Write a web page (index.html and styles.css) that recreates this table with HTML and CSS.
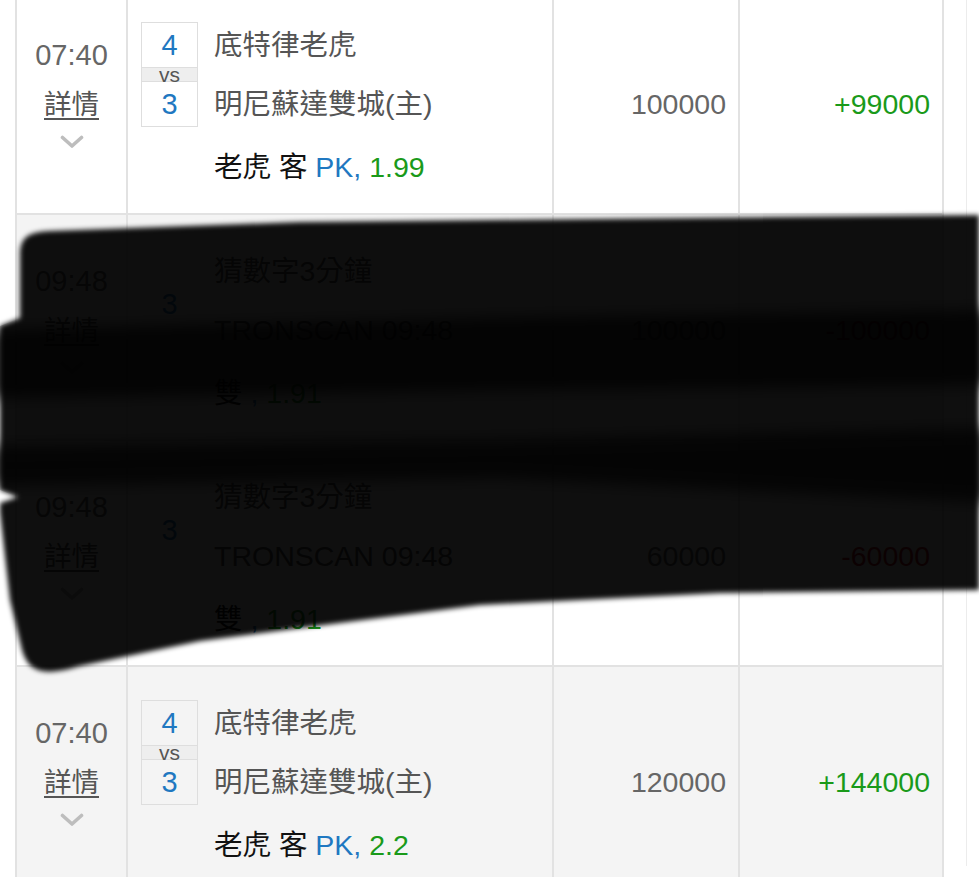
FILE: index.html
```html
<!DOCTYPE html>
<html lang="zh-Hant">
<head>
<meta charset="utf-8">
<title>注單</title>
<link rel="stylesheet" href="styles.css">
</head>
<body>
<div class="page">
  <div class="sheet">
    <div class="table">
      <div class="row">
        <div class="cell c-time">
          <div class="time">07:40</div>
          <a class="detail">詳情</a>
          <svg class="chev" viewBox="0 0 24 14" width="24" height="14"><path d="M2.5 2.5 L12 11 L21.5 2.5" fill="none" stroke="#bdbdbd" stroke-width="3.6" stroke-linecap="round" stroke-linejoin="round"/></svg>
        </div>
        <div class="cell c-match">
          <div class="score"><div class="s">4</div><div class="vs">vs</div><div class="s">3</div></div>
          <div class="names">
            <div class="ln">底特律老虎</div>
            <div class="ln">明尼蘇達雙城(主)</div>
            <div class="ln pick"><span class="k">老虎 客</span> <span class="hc">PK,</span> <span class="odds">1.99</span></div>
          </div>
        </div>
        <div class="cell c-amt">100000</div>
        <div class="cell c-res win">+99000</div>
      </div>

      <div class="row alt">
        <div class="cell c-time">
          <div class="time">09:48</div>
          <a class="detail">詳情</a>
          <svg class="chev" viewBox="0 0 24 14" width="24" height="14"><path d="M2.5 2.5 L12 11 L21.5 2.5" fill="none" stroke="#bdbdbd" stroke-width="3.6" stroke-linecap="round" stroke-linejoin="round"/></svg>
        </div>
        <div class="cell c-match">
          <div class="score plain"><div class="s">3</div></div>
          <div class="names">
            <div class="ln">猜數字3分鐘</div>
            <div class="ln">TRONSCAN 09:48</div>
            <div class="ln pick"><span class="k">雙</span> <span class="hc">,</span> <span class="odds">1.91</span></div>
          </div>
        </div>
        <div class="cell c-amt">100000</div>
        <div class="cell c-res lose">-100000</div>
      </div>

      <div class="row">
        <div class="cell c-time">
          <div class="time">09:48</div>
          <a class="detail">詳情</a>
          <svg class="chev" viewBox="0 0 24 14" width="24" height="14"><path d="M2.5 2.5 L12 11 L21.5 2.5" fill="none" stroke="#bdbdbd" stroke-width="3.6" stroke-linecap="round" stroke-linejoin="round"/></svg>
        </div>
        <div class="cell c-match">
          <div class="score plain"><div class="s">3</div></div>
          <div class="names">
            <div class="ln">猜數字3分鐘</div>
            <div class="ln">TRONSCAN 09:48</div>
            <div class="ln pick"><span class="k">雙</span> <span class="hc">,</span> <span class="odds">1.91</span></div>
          </div>
        </div>
        <div class="cell c-amt">60000</div>
        <div class="cell c-res lose">-60000</div>
      </div>

      <div class="row alt">
        <div class="cell c-time">
          <div class="time">07:40</div>
          <a class="detail">詳情</a>
          <svg class="chev" viewBox="0 0 24 14" width="24" height="14"><path d="M2.5 2.5 L12 11 L21.5 2.5" fill="none" stroke="#bdbdbd" stroke-width="3.6" stroke-linecap="round" stroke-linejoin="round"/></svg>
        </div>
        <div class="cell c-match">
          <div class="score"><div class="s">4</div><div class="vs">vs</div><div class="s">3</div></div>
          <div class="names">
            <div class="ln">底特律老虎</div>
            <div class="ln">明尼蘇達雙城(主)</div>
            <div class="ln pick"><span class="k">老虎 客</span> <span class="hc">PK,</span> <span class="odds">2.2</span></div>
          </div>
        </div>
        <div class="cell c-amt">120000</div>
        <div class="cell c-res win">+144000</div>
      </div>
    </div>
  </div>

  <svg class="redact" viewBox="0 0 979 877" width="979" height="877">
    <defs>
      <filter id="soft" x="-5%" y="-5%" width="110%" height="110%"><feGaussianBlur stdDeviation="2.4"/></filter>
      <filter id="softer" x="-5%" y="-20%" width="110%" height="140%"><feGaussianBlur stdDeviation="7"/></filter>
      <clipPath id="blobclip">
        <path d="M20 255 C20 236 30 232 50 231 L300 222 L979 215 L979 590 L720 593 L480 605 L200 641 L80 666 C40 678 28 670 22 650 L10 600 L0 512 L0 503 L18 497 L0 490 L0 326 L20 318 Z"/>
      </clipPath>
    </defs>
    <path filter="url(#soft)" fill="#000" fill-opacity="0.94" d="M20 255 C20 236 30 232 50 231 L300 222 L979 215 L979 590 L720 593 L480 605 L200 641 L80 666 C40 678 28 670 22 650 L10 600 L0 512 L0 503 L18 497 L0 490 L0 326 L20 318 Z"/>
    <g clip-path="url(#blobclip)">
      <path filter="url(#softer)" fill="#000" fill-opacity="0.75" d="M-20 330 L500 318 L1000 310 L1000 385 L500 390 L-20 398 Z"/>
      <path filter="url(#softer)" fill="#000" fill-opacity="0.7" d="M-20 446 L500 440 L1000 428 L1000 503 L500 478 L-20 486 Z"/>
    </g>
  </svg>
</div>
</body>
</html>
```

FILE: styles.css
```css
* { box-sizing: border-box; }

body {
  margin: 0;
  background: #fff;
  font-family: "Liberation Sans", "Noto Sans CJK TC", sans-serif;
  color: #555;
}

.page {
  position: relative;
  width: 979px;
  height: 877px;
  overflow: hidden;
}

.sheet {
  width: 967px;
  height: 100%;
  border-right: 1px solid #ececec;
}

.table {
  margin-left: 15px;
  margin-top: -11px;
  width: 929px;
  border-left: 2px solid #e2e2e2;
}

.row {
  display: grid;
  grid-template-columns: 111px 426px 186px 204px;
  height: 226px;
  border-bottom: 2px solid #e2e2e2;
  background: #fff;
}

.row.alt { background: #f4f4f4; }

.cell { border-right: 2px solid #e2e2e2; }

/* time column */
.c-time {
  display: flex;
  flex-direction: column;
  align-items: center;
  padding-top: 50px;
}

.time {
  font-size: 29px;
  line-height: 32px;
  color: #666;
}

.detail {
  margin-top: 17px;
  font-size: 27.5px;
  line-height: 34px;
  color: #555;
  text-decoration: underline;
  text-underline-offset: 4px;
  text-decoration-thickness: 1.5px;
}

.chev {
  display: block;
  margin-top: 13px;
}

/* match column */
.c-match {
  display: flex;
  align-items: flex-start;
  padding-left: 13px;
}

.score {
  width: 57px;
  margin-top: 33px;
  border: 1px solid #dedede;
  text-align: center;
}

.score .s {
  height: 44px;
  line-height: 44px;
  font-size: 29px;
  color: #1f78c1;
}

.score .vs {
  height: 15px;
  line-height: 13px;
  font-size: 21px;
  color: #555;
  background: #eee;
  border-top: 1px solid #dedede;
  border-bottom: 1px solid #dedede;
}

.score.plain {
  border: none;
  height: 105px;
  display: flex;
  align-items: center;
  justify-content: center;
  padding-top: 6px;
}

.names {
  margin-left: 16px;
  padding-top: 27px;
}

.ln {
  font-size: 28.5px;
  line-height: 59px;
  white-space: nowrap;
  color: #555;
}

.ln.pick {
  margin-top: 4px;
  color: #111;
}

.pick .hc { color: #1f78c1; }
.pick .odds { color: #1a9a1a; }

/* amount columns */
.c-amt, .c-res {
  display: flex;
  align-items: center;
  justify-content: flex-end;
  padding-right: 12px;
  padding-top: 6px;
  font-size: 28.5px;
}

.c-amt { color: #666; }
.c-res.win { color: #1a9a1a; }
.c-res.lose { color: #c4161c; }

/* redaction scribble lying over the table */
.redact {
  position: absolute;
  top: 0;
  left: 0;
  pointer-events: none;
}
```
